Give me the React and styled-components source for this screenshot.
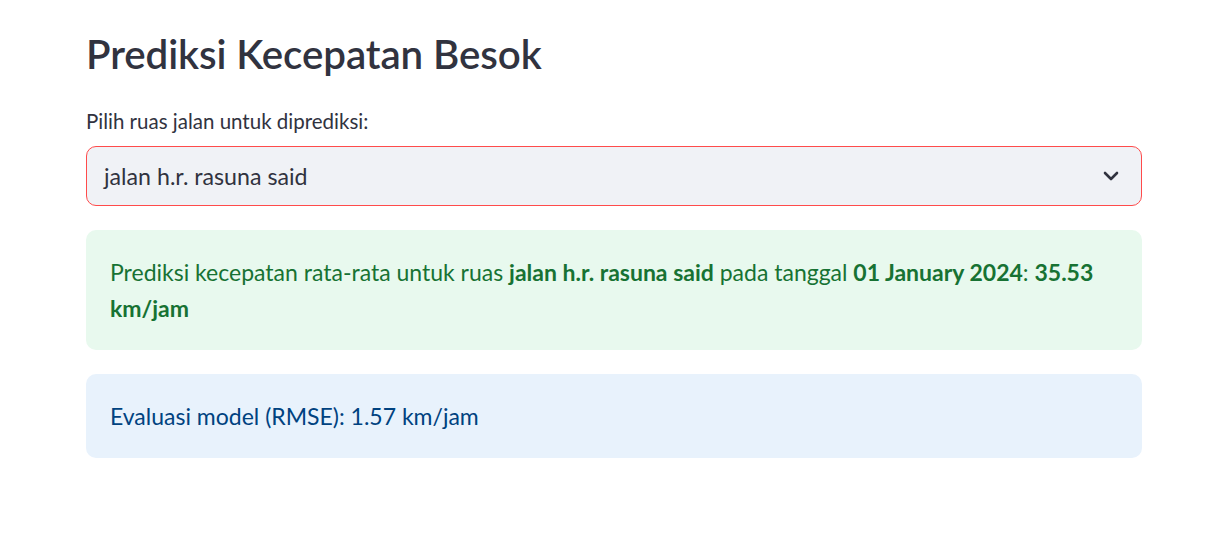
import React from "react";
import styled, { createGlobalStyle } from "styled-components";

const Global = createGlobalStyle`
  html, body { margin: 0; padding: 0; background: #ffffff; }
  body { font-family: "Lato", "Liberation Sans", sans-serif; color: #31333f; }
  * { box-sizing: border-box; }
`;

const Page = styled.main`
  width: 1056px;
  margin-left: 86px;
  padding-top: 28px;
  display: flex;
  flex-direction: column;
`;

const Title = styled.h1`
  margin: 0;
  font-size: 40.3px;
  font-weight: 600;
  line-height: 52px;
  color: #31333f;
  letter-spacing: -0.1px;
`;

const Label = styled.label`
  margin-top: 28px;
  font-size: 20.5px;
  line-height: 26px;
  color: #31333f;
`;

const SelectBox = styled.div`
  margin-top: 12px;
  height: 60px;
  border: 1px solid #ff4b4b;
  border-radius: 10px;
  background: #f0f2f6;
  display: flex;
  align-items: center;
  justify-content: space-between;
  padding: 0 22px 0 17px;
  font-size: 23.2px;
  color: #31333f;
`;

const Alert = styled.div`
  margin-top: 24px;
  border-radius: 10px;
  padding: 24px;
  font-size: 23px;
  line-height: 36px;
  background: ${(p) => (p.$kind === "success" ? "#e8f9ee" : "#e8f2fc")};
  color: ${(p) => (p.$kind === "success" ? "#177233" : "#004280")};
  b { font-weight: 700; }
`;

const Chevron = () => (
  <svg width="16" height="10" viewBox="0 0 16 10" fill="none" stroke="#31333f" strokeWidth="2.6" strokeLinecap="round" strokeLinejoin="round">
    <path d="M2 2l6 6 6-6" />
  </svg>
);

export default function App() {
  return (
    <>
      <Global />
      <Page>
        <Title>Prediksi Kecepatan Besok</Title>
        <Label>Pilih ruas jalan untuk diprediksi:</Label>
        <SelectBox>
          <span>jalan h.r. rasuna said</span>
          <Chevron />
        </SelectBox>
        <Alert $kind="success">
          Prediksi kecepatan rata-rata untuk ruas <b>jalan h.r. rasuna said</b> pada tanggal <b>01 January 2024</b>: <b>35.53 km/jam</b>
        </Alert>
        <Alert $kind="info">Evaluasi model (RMSE): 1.57 km/jam</Alert>
      </Page>
    </>
  );
}
